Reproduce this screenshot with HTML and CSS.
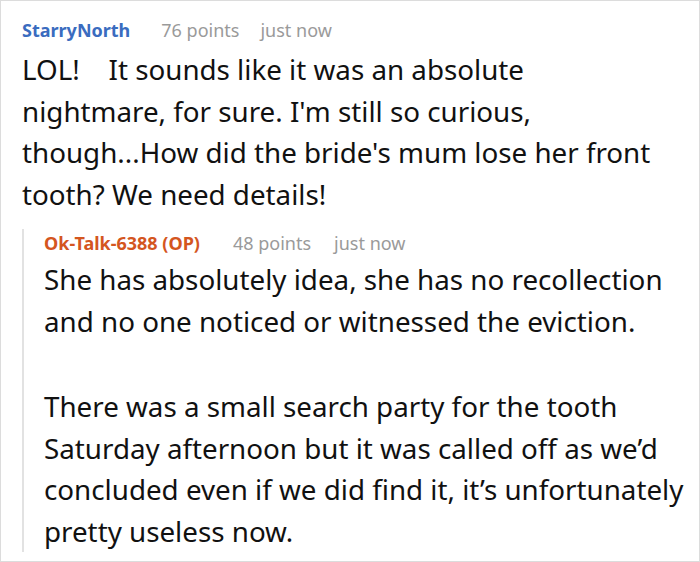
FILE: index.html
```html
<!DOCTYPE html>
<html lang="en">
<head>
    <meta charset="UTF-8">
    <meta name="viewport" content="width=device-width, initial-scale=1.0">
    <title>Comments</title>
    <link rel="stylesheet" href="styles.css">
</head>
<body>

    <div class="thread">
        <div class="comment">
            <div class="meta">
                <span class="author">StarryNorth</span>
                <span class="points">76 points</span>
                <span class="time">just now</span>
            </div>
            <p class="body">LOL!&nbsp;&nbsp;&nbsp; It sounds like it was an absolute nightmare, for sure. I'm still so curious, though...How did the bride's mum lose her front tooth? We need details!</p>

            <div class="replies">
                <div class="comment">
                    <div class="meta">
                        <span class="author op">Ok-Talk-6388 (OP)</span>
                        <span class="points">48 points</span>
                        <span class="time">just now</span>
                    </div>
                    <p class="body">She has absolutely idea, she has no recollection and no one noticed or witnessed the eviction.</p>
                    <p class="body">There was a small search party for the tooth Saturday afternoon but it was called off as we’d concluded even if we did find it, it’s unfortunately pretty useless now.</p>
                </div>
            </div>
        </div>
    </div>

</body>
</html>
```

FILE: styles.css
```css
html, body {
    margin: 0;
    padding: 0;
    background: #fff;
}

body {
    font-family: "Noto Sans", sans-serif;
    color: #111;
}

.thread {
    width: 700px;
    height: 562px;
    box-sizing: border-box;
    border: 1px solid #dcdcdc;
    padding: 15px 8px 0 21px;
    overflow: hidden;
}

.meta {
    font-size: 18px;
    line-height: 28px;
    display: flex;
    gap: 21px;
}

.author {
    font-weight: bold;
    color: #3a6cbf;
    margin-right: 10px;
}

.author.op {
    color: #d4561f;
    margin-right: 12px;
}

.points,
.time {
    color: #9a9a9a;
}

.replies .time {
    margin-left: 2px;
}

.body {
    font-size: 27.75px;
    line-height: 41.5px;
    margin: 0;
}

.comment > .body:first-of-type {
    margin-top: 5px;
}

.thread > .comment > .body {
    padding-right: 30px;
}

.replies {
    margin-top: 27px;
    border-left: 2px solid #e2e2e2;
    padding-left: 20px;
}

.replies .meta {
    margin-top: -13px;
}

.replies .comment > .body:first-of-type {
    margin-top: 2px;
}

.replies .body + .body {
    margin-top: 44px;
    margin-bottom: -16px;
}
```
